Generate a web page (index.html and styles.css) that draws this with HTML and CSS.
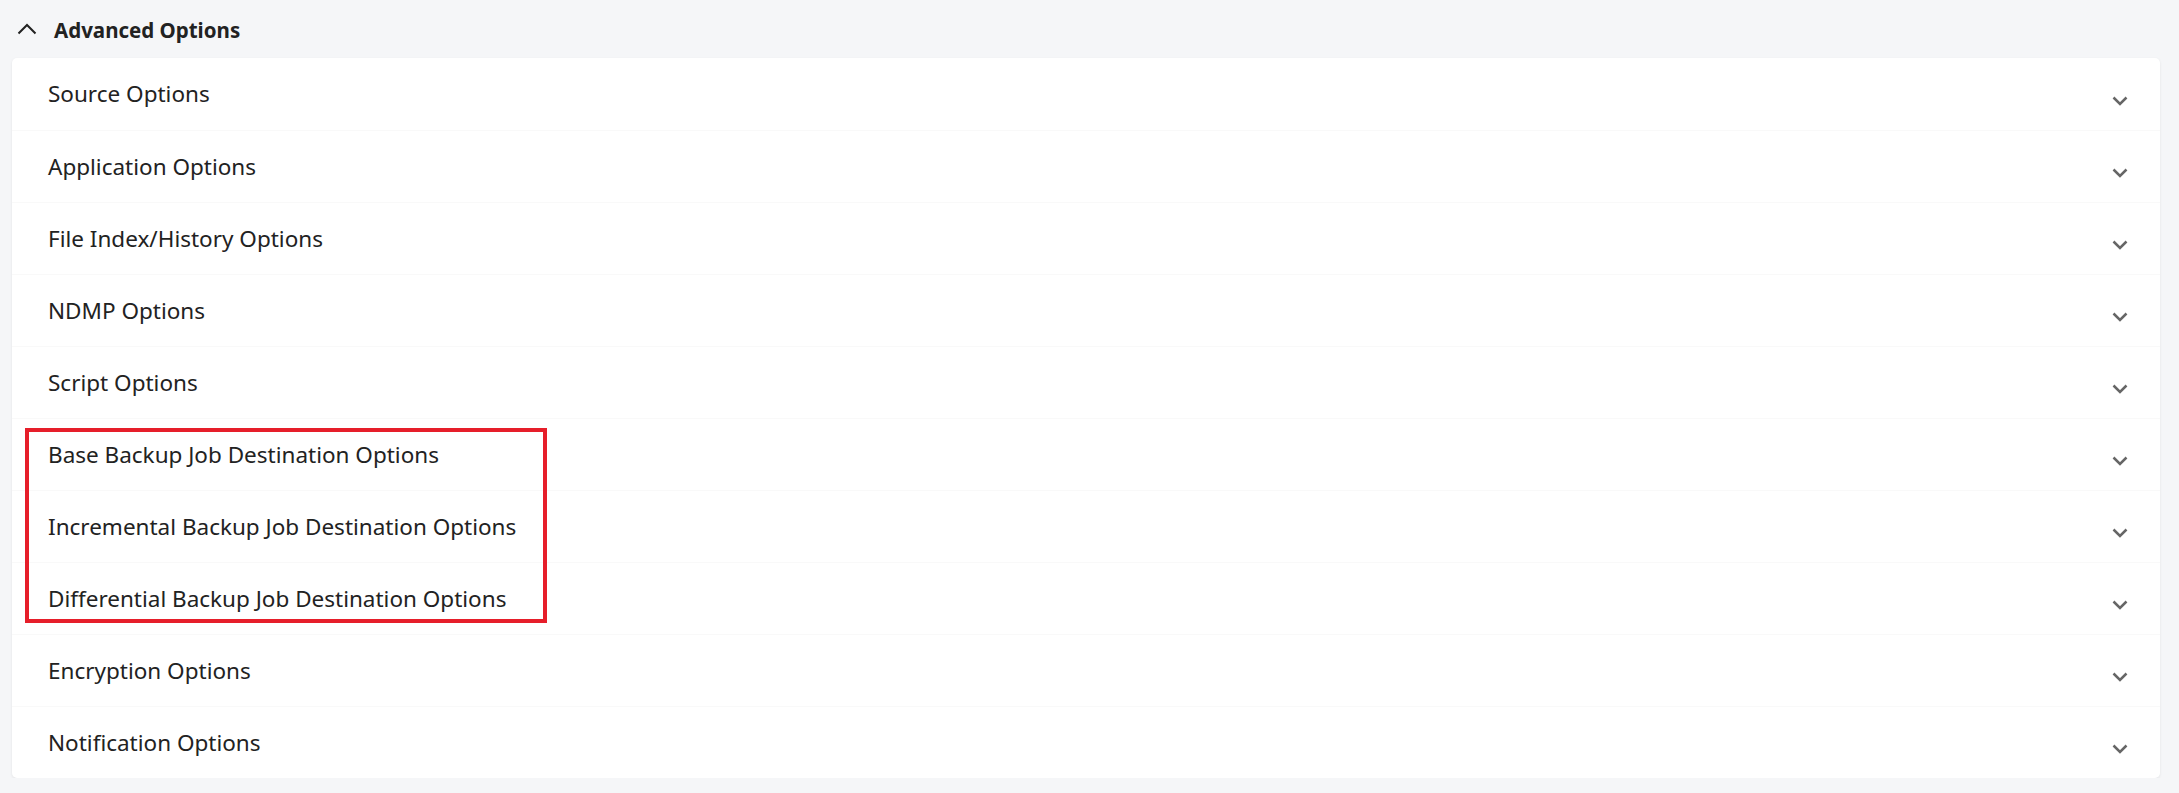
FILE: index.html
```html
<!DOCTYPE html>
<html>
<head>
<meta charset="utf-8">
<link rel="stylesheet" href="styles.css">
</head>
<body>
<div class="page">
  <div class="section-head">
    <svg class="chev-up" width="20" height="12" viewBox="0 0 20 12"><path d="M1.5 10.5 L10 2 L18.5 10.5" fill="none" stroke="#222" stroke-width="2"/></svg>
    <span class="section-title">Advanced Options</span>
  </div>
  <div class="card">
    <div class="row"><span>Source Options</span><svg class="chev" width="16" height="10" viewBox="0 0 16 10"><path d="M1.5 1.5 L8 8 L14.5 1.5" fill="none" stroke="#666" stroke-width="2.5"/></svg></div>
    <div class="row"><span>Application Options</span><svg class="chev" width="16" height="10" viewBox="0 0 16 10"><path d="M1.5 1.5 L8 8 L14.5 1.5" fill="none" stroke="#666" stroke-width="2.5"/></svg></div>
    <div class="row"><span>File Index/History Options</span><svg class="chev" width="16" height="10" viewBox="0 0 16 10"><path d="M1.5 1.5 L8 8 L14.5 1.5" fill="none" stroke="#666" stroke-width="2.5"/></svg></div>
    <div class="row"><span>NDMP Options</span><svg class="chev" width="16" height="10" viewBox="0 0 16 10"><path d="M1.5 1.5 L8 8 L14.5 1.5" fill="none" stroke="#666" stroke-width="2.5"/></svg></div>
    <div class="row"><span>Script Options</span><svg class="chev" width="16" height="10" viewBox="0 0 16 10"><path d="M1.5 1.5 L8 8 L14.5 1.5" fill="none" stroke="#666" stroke-width="2.5"/></svg></div>
    <div class="group">
      <div class="row"><span>Base Backup Job Destination Options</span><svg class="chev" width="16" height="10" viewBox="0 0 16 10"><path d="M1.5 1.5 L8 8 L14.5 1.5" fill="none" stroke="#666" stroke-width="2.5"/></svg></div>
      <div class="row"><span>Incremental Backup Job Destination Options</span><svg class="chev" width="16" height="10" viewBox="0 0 16 10"><path d="M1.5 1.5 L8 8 L14.5 1.5" fill="none" stroke="#666" stroke-width="2.5"/></svg></div>
      <div class="row"><span>Differential Backup Job Destination Options</span><svg class="chev" width="16" height="10" viewBox="0 0 16 10"><path d="M1.5 1.5 L8 8 L14.5 1.5" fill="none" stroke="#666" stroke-width="2.5"/></svg></div>
      <div class="highlight"></div>
    </div>
    <div class="row"><span>Encryption Options</span><svg class="chev" width="16" height="10" viewBox="0 0 16 10"><path d="M1.5 1.5 L8 8 L14.5 1.5" fill="none" stroke="#666" stroke-width="2.5"/></svg></div>
    <div class="row"><span>Notification Options</span><svg class="chev" width="16" height="10" viewBox="0 0 16 10"><path d="M1.5 1.5 L8 8 L14.5 1.5" fill="none" stroke="#666" stroke-width="2.5"/></svg></div>
  </div>
</div>
</body>
</html>
```
FILE: styles.css
```css
html, body {
  margin: 0;
  padding: 0;
  background: #f5f6f8;
  font-family: "Noto Sans", "Open Sans", sans-serif;
  color: #222;
}
.page {
  padding: 0 19px 0 12px;
}
.section-head {
  height: 58px;
  display: flex;
  align-items: center;
  padding-left: 5px;
  box-sizing: border-box;
}
.chev-up {
  margin-right: 17px;
  margin-top: 0;
}
.section-title {
  font-weight: 700;
  font-size: 20.5px;
  margin-top: 1px;
}
.card {
  background: #fff;
  border-radius: 5px;
  box-shadow: 0 1px 3px rgba(0,0,0,0.08);
}
.group {
  position: relative;
}
.row {
  height: 72px;
  display: flex;
  align-items: center;
  justify-content: space-between;
  padding: 0 32px 0 36px;
  border-top: 1px solid #f9f9f9;
  box-sizing: border-box;
  font-size: 22.5px;
}
.card > .row:first-child {
  border-top: none;
}
.row span {
  margin-top: -1px;
}
.chev {
  margin-top: 13px;
}
.highlight {
  position: absolute;
  left: 13px;
  top: 10px;
  width: 522px;
  height: 195px;
  border: 4px solid #e61e2a;
  box-sizing: border-box;
  pointer-events: none;
}
```
